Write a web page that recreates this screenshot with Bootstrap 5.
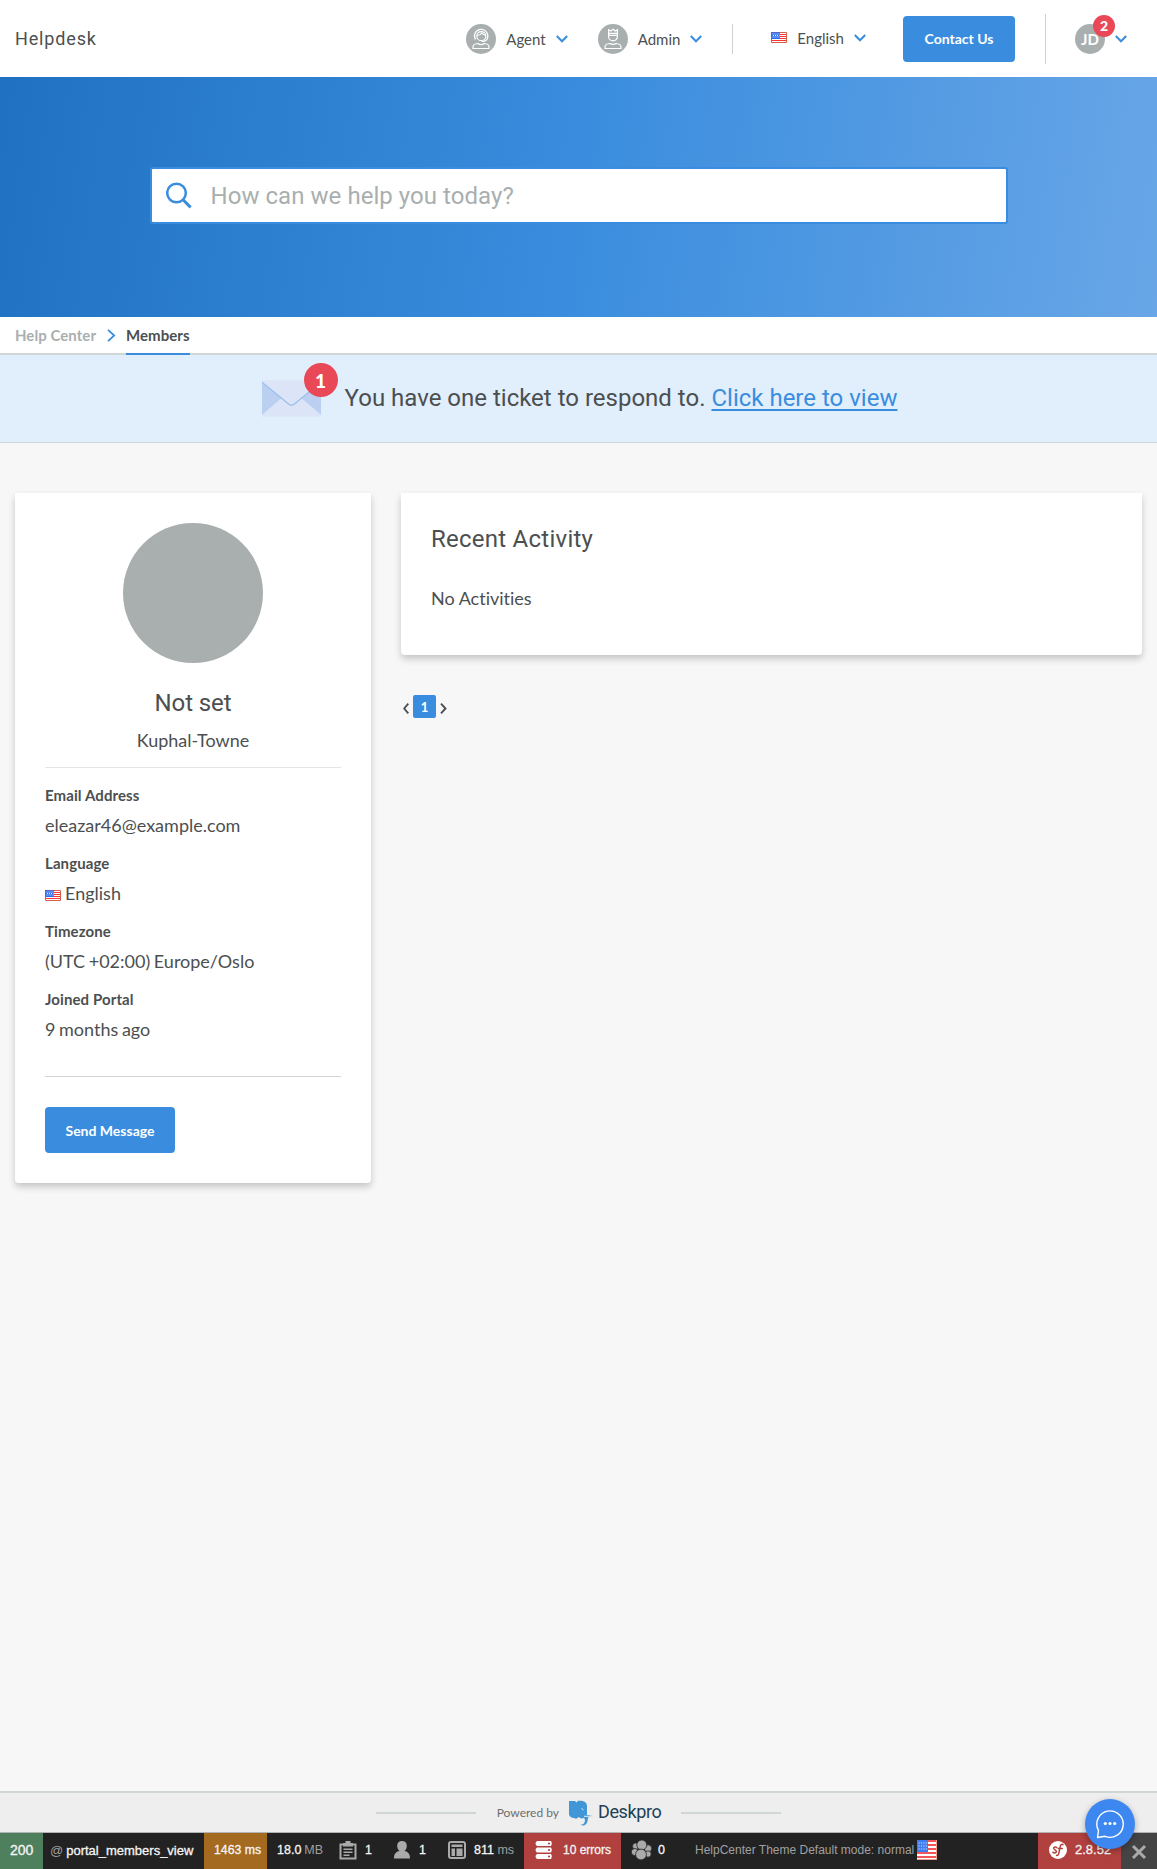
<!DOCTYPE html>
<html lang="en">
<head>
<meta charset="utf-8">
<meta name="viewport" content="width=device-width, initial-scale=1">
<title>Members - Helpdesk</title>
<link href="https://cdn.jsdelivr.net/npm/bootstrap@5.3.0/dist/css/bootstrap.min.css" rel="stylesheet">
<style>
body{font-family:Lato,sans-serif;font-size:18px;line-height:32px;color:#4c4f50;background:#f7f7f7;min-height:1869px;font-variant-ligatures:none}
svg{display:block;flex:none}
.rb{font-family:Roboto,sans-serif}

/* header */
.site-head{height:77px;padding:0 30px 0 15px;background:#fff}
.brand-name{font-size:18px;letter-spacing:.85px}
.role-menu{font-size:15px;line-height:30px;gap:10px;margin-right:30px}
.lang-menu{font-size:15px;line-height:28px;gap:10px;margin:0 37px 2px 38px}
.user-menu{gap:10px;margin-left:29px}
.vline{width:1px;height:30px;background:#d0d0d0}
.vline-tall{height:50px;margin-left:30px}
.btn-brand{background:#3a8dde;color:#fff;font-weight:700;font-size:14px;width:112px;height:46px;border-radius:4px;border:0;padding:0}
.btn-brand:hover{background:#2f7fcd;color:#fff}
.btn-wide{width:130px}
.avatar-s{width:30px;height:30px;border-radius:50%;background:#a9afaf;color:#fff;font-size:15px;font-weight:700}
.count{background:#e94956;color:#fff;border-radius:50%;font-family:Lato,sans-serif;font-weight:900;line-height:1}
.count-s{width:22px;height:22px;font-size:14px;top:-9px;left:18px}
.count-l{width:34px;height:34px;font-size:19px;top:-17px;left:42px}

/* search */
.hero{height:240px;padding-bottom:3px;background:linear-gradient(98deg,#2071c2 0%,#3a8dde 50%,#68a6e7 100%)}
.search-box{width:858px;height:57px;border:2px solid #3a8dde;border-radius:3px;background:#fff;padding-left:14px;gap:19px}
.search-box input{border:0;box-shadow:none;background:none;font-size:24px;color:#4c4f50;padding:0;letter-spacing:.05px}
.search-box input::placeholder{color:#a9afaf;opacity:1}

/* breadcrumb and notice */
.crumbs{height:38px;border-bottom:2px solid #d0d5d5;background:#fff;padding-left:15px;gap:10.500px;font-size:15px;font-weight:700;line-height:36px;letter-spacing:.05px}
.crumbs .parent{color:#a9afaf}
.crumbs .here{height:38px;border-bottom:2px solid #3a8dde}
.notice{height:88px;padding-left:2px;background:#e1eefc;border-bottom:1px solid #d0d6d9;font-size:24px}
.notice-text{padding-bottom:1px}
.notice a{color:#3a8dde;text-decoration-thickness:2px;text-underline-offset:3px}

/* panels */
.page-body{padding:50px 15px 0;gap:30px}
.panel{background:#fff;border-radius:0 0 4px 4px;box-shadow:0 4px 7px rgba(0,0,0,.2)}
.side{width:356px;height:690px;padding:30px}
.activity{height:162px;padding:31px 30px 0}
.h-title{font-size:24px;line-height:30px;font-weight:400}
.activity .h-title{letter-spacing:.25px;margin-bottom:28px}
.side .h-title{margin:25px 0 6px;letter-spacing:-.1px}
.avatar-l{width:140px;height:140px;border-radius:50%;background:#a9afaf}
.rule{height:1px;background:#e3e4e4;margin:11px 0 13px}
.rule-end{background:#d3d4d4;margin:31px 0 30px}
.flabel{font-size:15px;font-weight:700;line-height:28px;letter-spacing:.1px}
.fvalue{line-height:32px;margin-bottom:8px;word-spacing:-1px}
.pager{margin-top:40px;padding-left:2px;gap:4px}
.page-no{width:23px;height:23px;border-radius:2px;background:#3a8dde;color:#fff;font-size:13px;font-weight:700;line-height:24px}

/* footer */
.foot{height:42px;background:#eee;border-top:2px solid #d0d6d6;border-bottom:1px solid #b0b4b4;font-size:12px;color:#6b6e6e}
.foot-line{width:100px;height:2px;background:#d0d6d6}
.foot-by{margin:0 10px 0 21px}
.foot-name{font-size:18px;letter-spacing:-.4px;color:#223f57;margin:0 20px 2px 5px}

/* profiler bar */
.dbg{height:36px;background:#222;color:#f5f5f5;font:12.5px/34px "Liberation Sans",Arial,sans-serif;white-space:nowrap}
.dbg-block{height:36px;display:flex;flex:none;-webkit-text-stroke:.3px}
.dbg-block svg{margin-top:7px}
.dbg .dim{color:#a0a0a0;-webkit-text-stroke:0}
.st{width:43px;padding-left:10px;background:#4f805d;font-size:14px}
.rt{width:161px;padding-left:7px;font-size:13px;line-height:36px;gap:3px}
.tm{width:63px;padding-left:10px;background:#a46a1f;font-size:12.300px}
.mem{width:72px;padding-left:10px;gap:3px}
.fm{width:55px;gap:8px}
.us{width:54px;gap:9px}
.tw{width:76px;gap:8px}
.er{width:97px;padding-left:11px;gap:10px;background:#b0413e;font-size:12px}
.aj{width:74px;padding-left:10px;gap:6px}
.th{gap:3px;font-size:12px}
.sf{width:83px;padding-left:11px;gap:8px;background:#b0413e;font-size:13px}
.cl{width:36px;background:#444;padding-left:10px}
.cl svg{margin-top:11px}
.chat{right:22px;bottom:20px;width:50px;height:50px;background:#3d87f0;box-shadow:0 2px 6px rgba(0,0,0,.3)}
</style>
</head>
<body class="d-flex flex-column">
<svg width="0" height="0" class="position-absolute">
<defs>
<symbol id="chev" viewBox="0 0 12 8"><path d="M.8 1 6 6.300 11.200 1" fill="none" stroke="#3a8dde" stroke-width="2"/></symbol>
<symbol id="flag" viewBox="0 0 16 11"><path fill="#fff" d="M0 0h16v11H0z"/><path stroke="#f33" d="M0 2.500h16M0 4.500h16M0 6.500h16M0 8.500h16"/><path fill="#2a6cf0" d="M0 0h9v7H0z"/><path stroke="#fff" stroke-width=".9" stroke-dasharray="1 1" d="M1.500 2h7M2 3.500h6.500M1.500 5h7"/><path fill="none" stroke="#d0604a" d="M.5.5h15v10H.5z"/><path fill="none" stroke="#5c62c8" d="M.5 7V.5H9"/></symbol>
</defs>
</svg>

<header class="site-head d-flex align-items-center">
<div class="brand-name rb me-auto">Helpdesk</div>
<div class="role-menu d-flex align-items-center">
<svg width="30" height="30" viewBox="0 0 30 30"><circle cx="15" cy="15" r="15" fill="#a9afaf"/><g fill="none" stroke="#fff" stroke-width="1.200"><path d="M9.400 15.500a6.700 6.700 0 1 1 12-1c-.8 2-2.600 3-5.400 3"/><circle cx="15.300" cy="12.200" r="4.500"/><path d="M11 11.500c2.800 0 3.800-1 4.800-2.500 1 1.500 2 2 4 2.200"/><path d="M7 24.500v-1.500c0-2.500 2-3.300 5-3.500 1.500 1.500 4.500 1.500 6 0 3 .2 5 1 5 3.500v1.500z"/></g></svg>
<span>Agent</span>
<svg width="12" height="8"><use href="#chev"/></svg>
</div>
<div class="role-menu d-flex align-items-center">
<svg width="30" height="30" viewBox="0 0 30 30"><circle cx="15" cy="15" r="15" fill="#a9afaf"/><g fill="none" stroke="#fff" stroke-width="1.200"><path d="M10.600 11V5.700l2.200 1.300L15 5.300l2.200 1.700 2.200-1.300V11M10.600 9.300h8.800M10.600 11.300h8.800M10.600 11v1.500a4.400 4.400 0 0 0 8.800 0V11"/><path d="M7 24.500v-1.500c0-2.500 2-3.300 5-3.500 1.500 1.200 4.500 1.200 6 0 3 .2 5 1 5 3.500v1.500z"/></g></svg>
<span>Admin</span>
<svg width="12" height="8"><use href="#chev"/></svg>
</div>
<div class="vline"></div>
<div class="lang-menu d-flex align-items-center">
<svg width="16" height="11"><use href="#flag"/></svg>
<span>English</span>
<svg width="12" height="8"><use href="#chev"/></svg>
</div>
<button class="btn btn-brand">Contact Us</button>
<div class="vline vline-tall"></div>
<div class="user-menu d-flex align-items-center">
<div class="position-relative"><div class="avatar-s d-flex align-items-center justify-content-center">JD</div><span class="count count-s position-absolute d-flex align-items-center justify-content-center">2</span></div>
<svg width="12" height="8"><use href="#chev"/></svg>
</div>
</header>

<section class="hero d-flex align-items-center justify-content-center">
<div class="search-box d-flex align-items-center">
<svg width="26" height="27" viewBox="0 0 26 27"><circle cx="10.500" cy="11" r="9.300" fill="none" stroke="#3a8dde" stroke-width="2.500"/><path d="m17.300 18 7.300 7.400" stroke="#3a8dde" stroke-width="3"/></svg>
<input class="form-control rb" placeholder="How can we help you today?" aria-label="Search">
</div>
</section>

<nav class="crumbs d-flex"><span class="parent">Help Center</span>
<svg width="9" height="13" viewBox="0 0 9 13" class="align-self-center"><path d="m1 .8 6.200 5.700L1 12.200" fill="none" stroke="#3a8dde" stroke-width="1.800"/></svg>
<span class="here">Members</span></nav>

<section class="notice rb d-flex align-items-center justify-content-center">
<div class="position-relative"><svg width="59" height="37" viewBox="0 0 60 37"><path fill="#dce5f7" d="M0 0h60v37H0z"/><path fill="#bbd0f1" d="M0 2v33l20-17zM60 2v33L40 18z"/><path d="M0 2 27 24q3 2.500 6 0L60 2" fill="none" stroke="#9cbfee" stroke-width="1.300"/></svg><span class="count count-l position-absolute d-flex align-items-center justify-content-center">1</span></div>
<div class="notice-text ms-4">You have one ticket to respond to. <a href="#">Click here to view</a></div>
</section>

<main class="page-body d-flex align-items-start">
<aside class="panel side">
<div class="avatar-l mx-auto"></div>
<h2 class="h-title rb text-center">Not set</h2>
<div class="text-center">Kuphal-Towne</div>
<div class="rule"></div>
<div class="flabel">Email Address</div><div class="fvalue">eleazar46@example.com</div>
<div class="flabel">Language</div><div class="fvalue d-flex align-items-center gap-1"><svg class="mt-1" width="16" height="11"><use href="#flag"/></svg>English</div>
<div class="flabel">Timezone</div><div class="fvalue">(UTC +02:00) Europe/Oslo</div>
<div class="flabel">Joined Portal</div><div class="fvalue">9 months ago</div>
<div class="rule rule-end"></div>
<button class="btn btn-brand btn-wide d-block">Send Message</button>
</aside>
<div class="flex-grow-1">
<section class="panel activity"><h2 class="h-title rb">Recent Activity</h2><div>No Activities</div></section>
<div class="pager d-flex align-items-center">
<svg class="mt-1" width="6" height="11" viewBox="0 0 6 11"><path d="M5.300.7 1.200 5.500l4.100 4.800" fill="none" stroke="#4c4f50" stroke-width="1.900"/></svg>
<div class="page-no text-center">1</div>
<svg class="mt-1" width="7" height="11" viewBox="0 0 7 11"><path d="M1 .7 5.500 5.500 1 10.300" fill="none" stroke="#4c4f50" stroke-width="1.900"/></svg>
</div>
</div>
</main>

<footer class="mt-auto">
<div class="foot d-flex align-items-center justify-content-center">
<div class="foot-line"></div><span class="foot-by">Powered by</span>
<svg width="24" height="26" viewBox="0 0 24 26"><path fill="#4196d8" d="M0 1h6l1.500 1.500L9 .8c5-.5 9 1 9 5.200v9l6 1-5 1.500c0 4-1.500 8.500-5.500 8l-2.500-.8c3.500 0 5-2 5-5l-1-1.700-3 .5-2.500-1.500-1.500 1.500C4 18.500 0 17 0 14z"/><path d="m12.500 8.500 2 1.500M15 16.300h8.500" stroke="#eee" stroke-width="1" fill="none"/></svg>
<span class="foot-name rb">Deskpro</span><div class="foot-line"></div>
</div>
<div class="dbg d-flex">
<div class="dbg-block st">200</div>
<div class="dbg-block rt"><span class="dim">@</span><span>portal_members_view</span></div>
<div class="dbg-block tm">1463 ms</div>
<div class="dbg-block mem"><span>18.0</span><span class="dim">MB</span></div>
<div class="dbg-block fm"><svg width="18" height="20" viewBox="0 0 18 20"><path d="M1.500 4.500h15v14h-15z" fill="none" stroke="#aaa" stroke-width="2"/><path fill="#aaa" d="M4 3h2.500V1h5v2H14v3.500H4zM4.500 8.500h9V10h-9zm0 3h9V13h-9zm0 3h6V16h-6z"/></svg>1</div>
<div class="dbg-block us"><svg width="16" height="20" viewBox="0 0 16 20"><path fill="#aaa" d="M8 1c3 0 4.800 2 4.800 4.800 0 2.500-1 4.200-2.300 5.200 3.500.8 5.500 2.500 5.500 7.500H0C0 13.500 2 11.800 5.500 11 4.200 10 3.200 8.300 3.200 5.800 3.200 3 5 1 8 1z"/></svg>1</div>
<div class="dbg-block tw"><svg width="18" height="20" viewBox="0 0 18 20"><rect x="1" y="2" width="16" height="16" rx="2" fill="none" stroke="#aaa" stroke-width="2"/><path fill="#aaa" d="M3.500 4.500h11v2.500h-11zM3.500 8.500h3.500v7.500H3.500zM8.500 8.500h6v7.500h-6z"/></svg><span>811 <span class="dim">ms</span></span></div>
<div class="dbg-block er"><svg width="18" height="20" viewBox="0 0 18 20"><path fill="#fff" d="M2 1h14q1.500 2.500 0 5H2Q-1 3.500 2 1zM2 7.500h14q1.500 2.500 0 5H2q-3-2.500 0-5zM2 14h14q1.500 2.500 0 5H2q-3-2.500 0-5z"/><g fill="#b0413e"><circle cx="14" cy="3.500" r="1.100"/><circle cx="14" cy="10" r="1.100"/><circle cx="14" cy="16.500" r="1.100"/></g></svg>10 errors</div>
<div class="dbg-block aj"><svg width="21" height="20" viewBox="0 0 21 20"><g fill="#aaa" stroke="#222" stroke-width=".8"><circle cx="4.800" cy="6.200" r="3.300"/><circle cx="3.800" cy="12" r="3.500"/><circle cx="17" cy="8.500" r="3.700"/><circle cx="17" cy="14" r="3.200"/><circle cx="10.800" cy="5" r="5"/><circle cx="10" cy="14.500" r="5.400"/></g></svg>0</div>
<div class="dbg-block th dim me-auto">HelpCenter Theme Default mode: normal<svg width="20" height="20" viewBox="0 0 20 20"><path fill="#fff" d="M0 0h20v20H0z"/><path stroke="#f0555a" stroke-width="2" d="M0 1h20M0 5h20M0 9h20M0 13h20M0 17h20"/><path stroke="#f0a08c" d="M0 19.500h20M19.500 0v20"/><path fill="#3f7cf0" d="M0 0h11v12H0z"/><path stroke="#cfe0ff" stroke-dasharray="1.200 1.200" d="M1.500 3h8.500M1.500 6h8.500M1.500 9h8.500"/></svg></div>
<div class="dbg-block sf"><svg width="18" height="20" viewBox="0 0 18 20"><circle cx="9" cy="10" r="9" fill="#fff"/><path fill="none" stroke="#b0413e" stroke-width="1.500" stroke-linecap="round" d="M7.800 7.600c-1-1.100-3.200-.6-3.100.7.100 1.500 2.900 1.600 2.700 3.400-.2 1.500-2.500 1.900-3.500.6M14 4.800c-.8-1.200-2.300-.4-2.800 1.800l-1.300 6.200c-.4 2-1.300 3-2.300 2.500M9.300 8.600h4"/></svg>2.8.52</div>
<div class="dbg-block cl"><svg width="16" height="16" viewBox="0 0 16 16"><path d="m2 2 12 12M14 2 2 14" stroke="#aaa" stroke-width="3"/></svg></div>
</div>
</footer>
<a href="#" class="chat position-fixed rounded-circle d-flex align-items-center justify-content-center" aria-label="Chat"><svg width="30" height="30" viewBox="0 0 30 30"><path d="M3.500 21.500A13.200 13.200 0 1 1 10 27.300L2.500 28.500z" fill="none" stroke="#fff" stroke-width="1.400" stroke-linejoin="round"/><g fill="#fff"><circle cx="10.300" cy="14.500" r="1.600"/><circle cx="15" cy="14.500" r="1.600"/><circle cx="19.700" cy="14.500" r="1.600"/></g></svg></a>
<script src="https://cdn.jsdelivr.net/npm/bootstrap@5.3.0/dist/js/bootstrap.bundle.min.js"></script>
</body>
</html>
